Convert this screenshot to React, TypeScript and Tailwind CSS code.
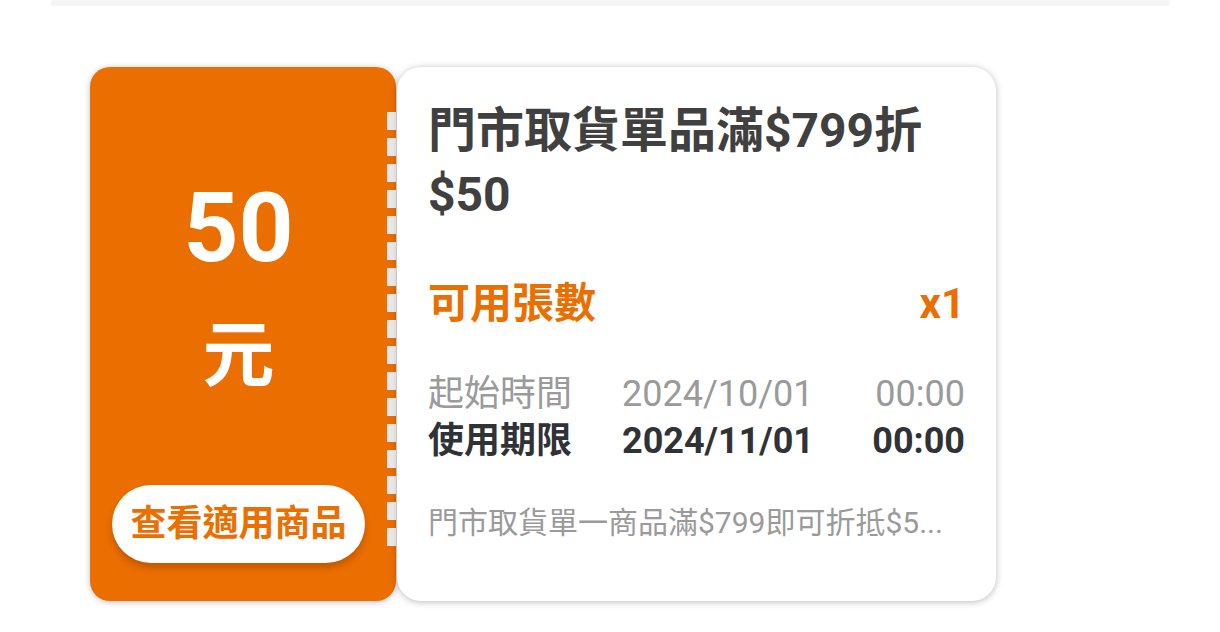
import React from "react";

const ORANGE = "#eb6e00";

export default function App() {
  const dashes = Array.from({ length: 17 });
  return (
    <div
      className="w-[1220px] h-[632px] bg-white overflow-hidden"
      style={{ fontFamily: 'Roboto, "Noto Sans CJK TC", sans-serif' }}
    >
      <div className="mx-[51px] h-[6px] bg-[#f5f5f5]" />
      <div className="mt-[61px] ml-[90px] flex gap-[1px] h-[534px]">
        {/* left orange stub */}
        <div className="w-[306px] h-full rounded-[20px] bg-[#eb6e00] shadow-[0_1px_6px_rgba(0,0,0,0.25)] flex">
          <div className="flex-1 flex flex-col items-center pt-[113px]">
            <div className="text-[96px] leading-none font-bold text-white">50</div>
            <div className="mt-[44px] text-[72px] leading-none font-bold text-white">元</div>
            <button className="mt-[93px] w-[253px] h-[78px] rounded-full bg-white text-[36px] font-bold text-[#eb6e00] shadow-[0_5px_6px_rgba(120,50,0,0.35)] flex items-center justify-center">
              查看適用商品
            </button>
          </div>
          <div className="w-[9px] flex flex-col gap-[8px] pt-[45px] mr-[0px]">
            {dashes.map((_, i) => (
              <div key={i} className="h-[18px] w-[9px] bg-gradient-to-r from-[#e3e3e3] to-[#f4f4f4]" />
            ))}
          </div>
        </div>
        {/* right white card */}
        <div className="w-[599px] h-full rounded-[24px] bg-white shadow-[0_1px_7px_rgba(0,0,0,0.28)] flex flex-col pt-[32px] pl-[31px] pr-[31px]">
          <div className="text-[48px] leading-[64px] font-bold text-[#404040]">
            門市取貨單品滿$799折 $50
          </div>
          <div className="mt-[48px] h-[56px] flex items-center justify-between text-[42px] font-bold text-[#eb6e00]">
            <span>可用張數</span>
            <span>x1</span>
          </div>
          <div className="mt-[40px] grid grid-cols-[194px_1fr_auto] text-[36px] leading-[47px] text-[#9a9a9a]">
            <span>起始時間</span>
            <span>2024/10/01</span>
            <span className="text-right">00:00</span>
          </div>
          <div className="grid grid-cols-[194px_1fr_auto] text-[36px] leading-[47px] font-bold text-[#2f3236]">
            <span>使用期限</span>
            <span>2024/11/01</span>
            <span className="text-right">00:00</span>
          </div>
          <div className="mt-[38px] text-[30px] leading-[40px] text-[#9a9a9a] whitespace-nowrap overflow-hidden">
            門市取貨單一商品滿$799即可折抵$5...
          </div>
        </div>
      </div>
    </div>
  );
}
